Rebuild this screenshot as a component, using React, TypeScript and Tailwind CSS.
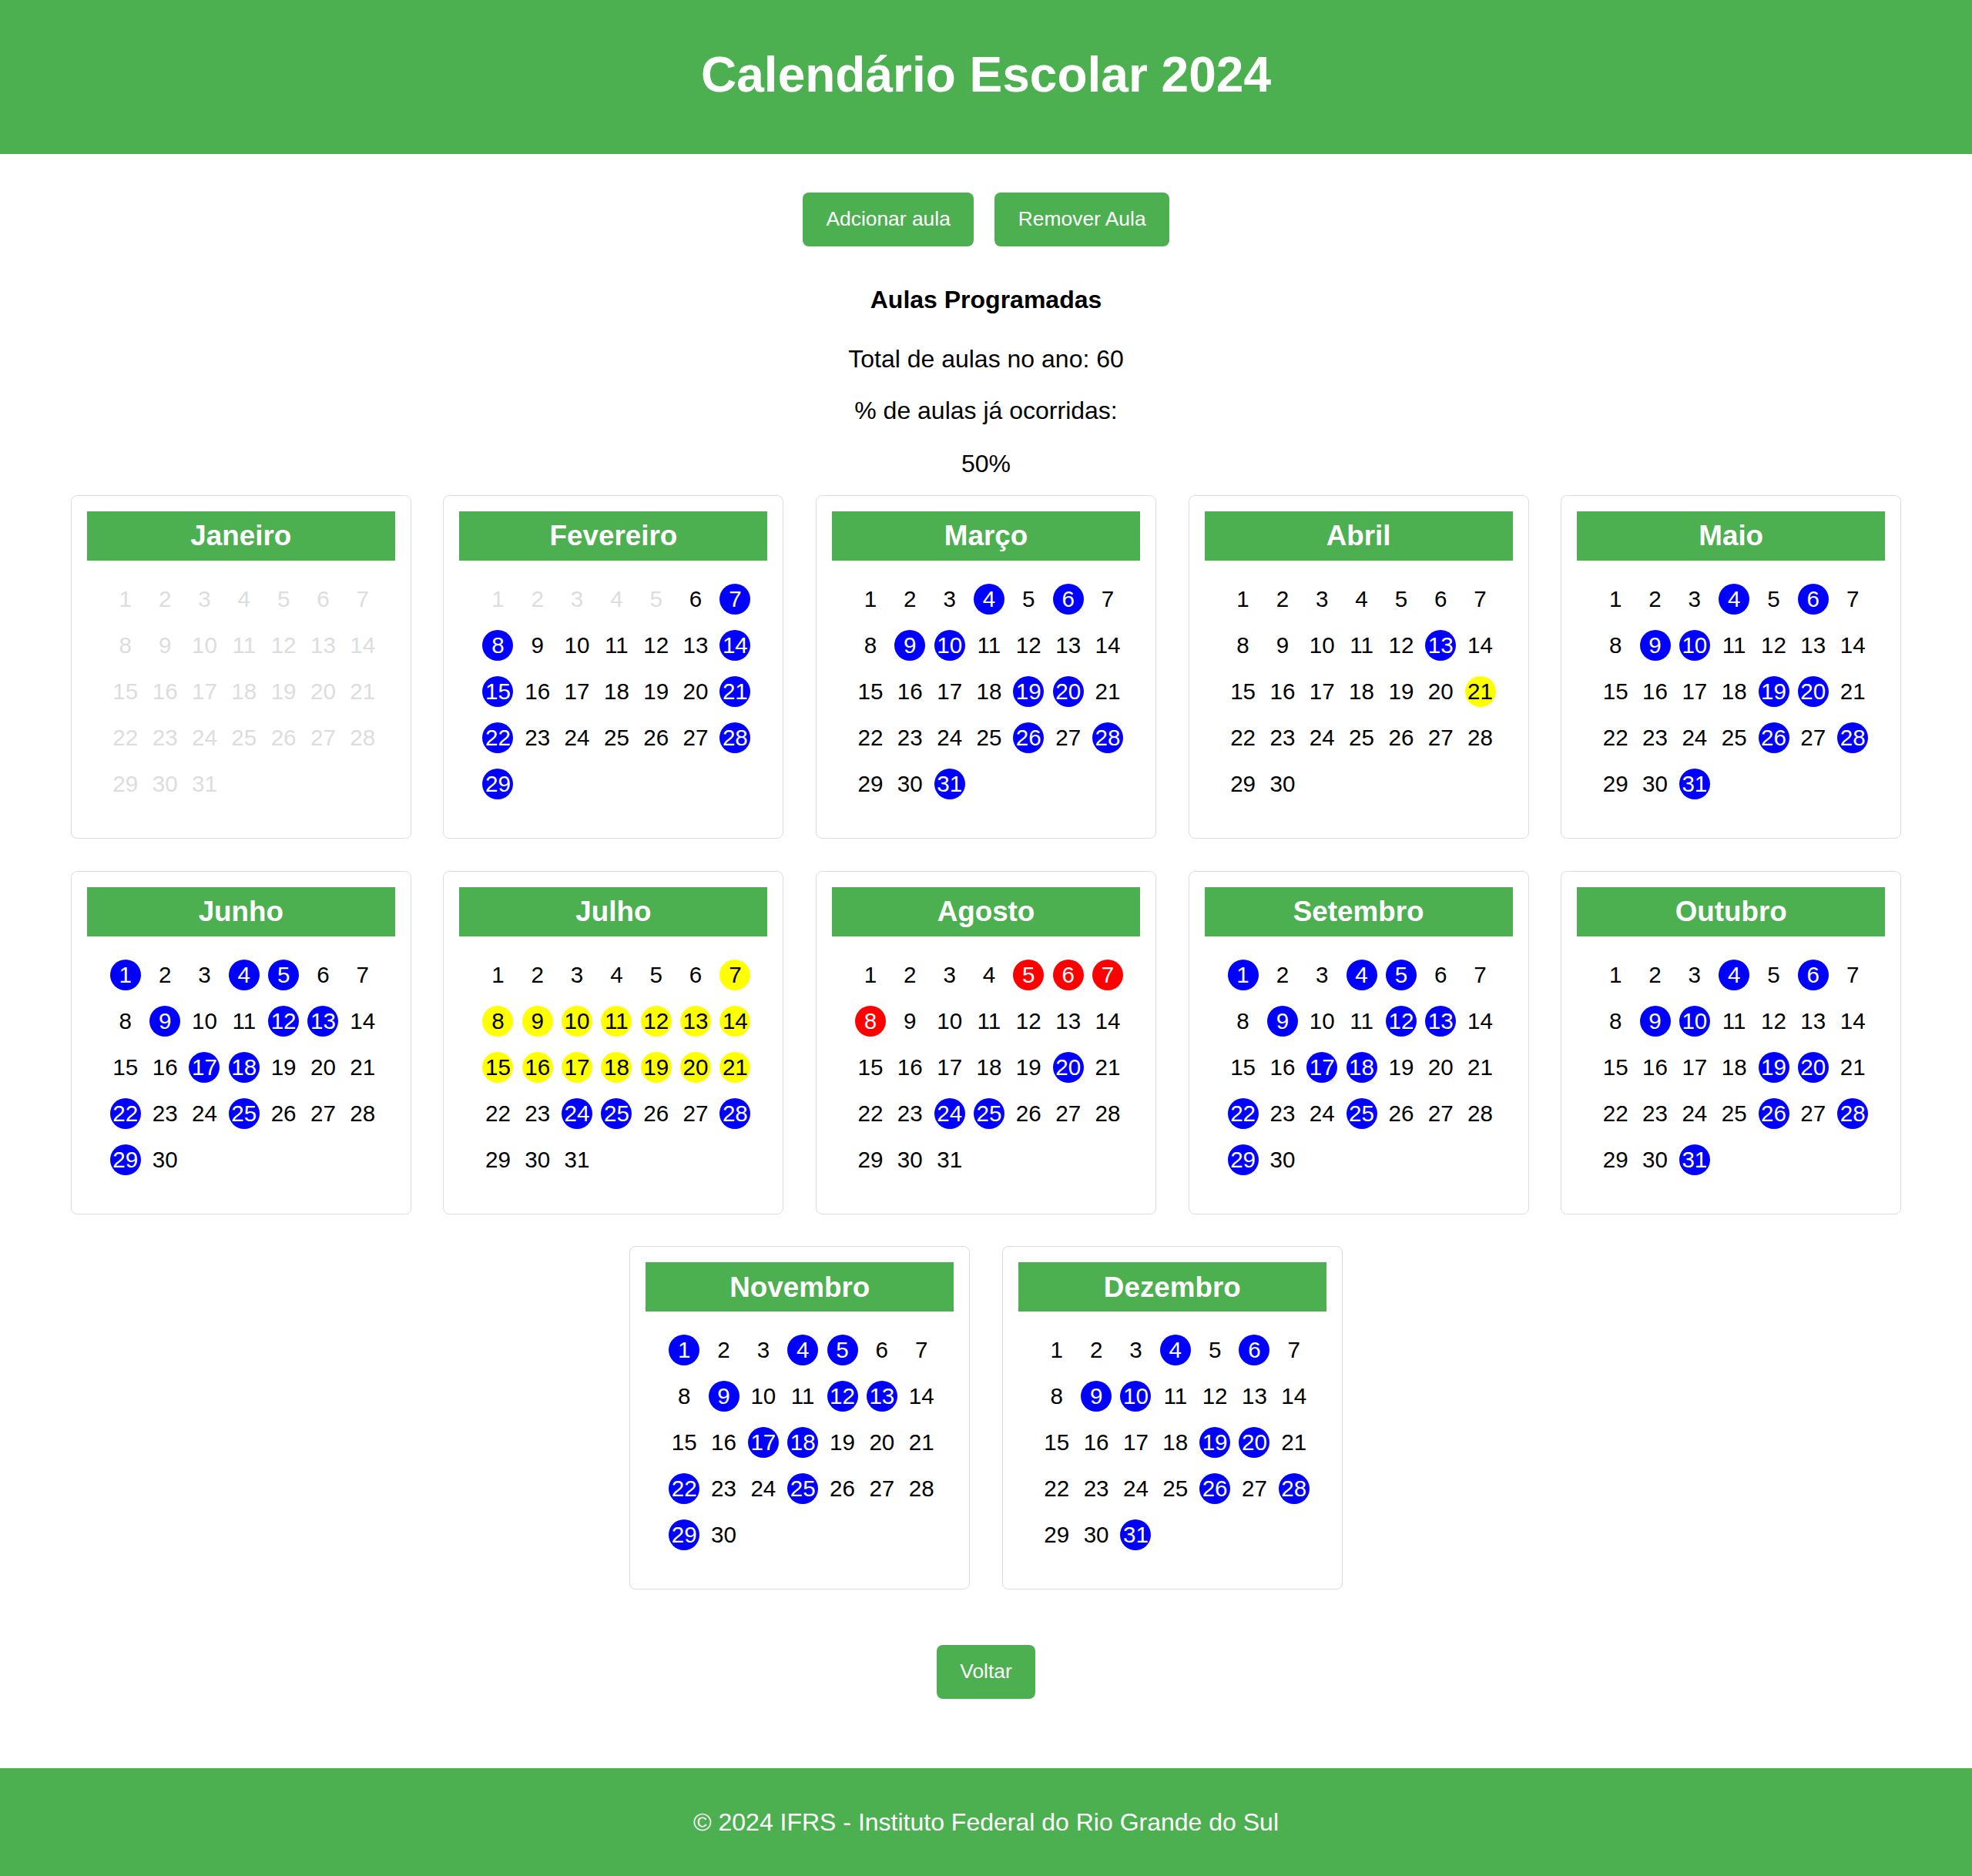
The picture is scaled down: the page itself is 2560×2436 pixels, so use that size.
import React from 'react';

type DayKind = 'past' | 'blue' | 'yellow' | 'red' | 'normal';

interface Month {
  name: string;
  days: number;
  past?: number[];
  blue?: number[];
  yellow?: number[];
  red?: number[];
}

const range = (a: number, b: number) => Array.from({ length: b - a + 1 }, (_, i) => a + i);

const patternA = [4, 6, 9, 10, 19, 20, 26, 28, 31];
const patternB = [1, 4, 5, 9, 12, 13, 17, 18, 22, 25, 29];

const months: Month[] = [
  { name: 'Janeiro', days: 31, past: range(1, 31) },
  { name: 'Fevereiro', days: 29, past: range(1, 5), blue: [7, 8, 14, 15, 21, 22, 28, 29] },
  { name: 'Março', days: 31, blue: patternA },
  { name: 'Abril', days: 30, blue: [13], yellow: [21] },
  { name: 'Maio', days: 31, blue: patternA },
  { name: 'Junho', days: 30, blue: patternB },
  { name: 'Julho', days: 31, yellow: range(7, 21), blue: [24, 25, 28] },
  { name: 'Agosto', days: 31, red: [5, 6, 7, 8], blue: [20, 24, 25] },
  { name: 'Setembro', days: 30, blue: patternB },
  { name: 'Outubro', days: 31, blue: patternA },
  { name: 'Novembro', days: 30, blue: patternB },
  { name: 'Dezembro', days: 31, blue: patternA },
];

const kindOf = (m: Month, d: number): DayKind => {
  if (m.past?.includes(d)) return 'past';
  if (m.blue?.includes(d)) return 'blue';
  if (m.yellow?.includes(d)) return 'yellow';
  if (m.red?.includes(d)) return 'red';
  return 'normal';
};

const dayStyles: Record<DayKind, string> = {
  past: 'text-[#dddddd]',
  blue: 'bg-[#0000ff] text-white',
  yellow: 'bg-[#ffff00] text-black',
  red: 'bg-[#ff0000] text-white',
  normal: 'text-black',
};

const MonthCard = ({ month }: { month: Month }) => (
  <div className="w-[442px] border border-[#dddddd] rounded-[8px] p-[20px] bg-white">
    <div className="h-[64px] bg-[#4caf50] flex items-center justify-center text-white font-bold text-[36.8px]">
      {month.name}
    </div>
    <div className="pl-[30px] py-[30px] grid grid-cols-[repeat(7,40px)] gap-x-[11.33px] gap-y-[20px]">
      {range(1, month.days).map((d) => (
        <div
          key={d}
          className={`w-[40px] h-[40px] rounded-full flex items-center justify-center text-[29.6px] leading-[40px] whitespace-nowrap ${dayStyles[kindOf(month, d)]}`}
        >
          {d}
        </div>
      ))}
    </div>
  </div>
);

export default function App() {
  return (
    <div className="min-h-[2436px] bg-white flex flex-col font-['Liberation_Sans',Arial,sans-serif] text-black">
      {/* Cabeçalho */}
      <header className="h-[200px] bg-[#4caf50] pt-[61px] text-center">
        <h1 className="text-[64px] font-bold text-white leading-[1.149]">Calendário Escolar 2024</h1>
      </header>

      {/* Botões */}
      <div className="mt-[50px] flex justify-center gap-[27px]">
        <button className="h-[70px] px-[30.5px] bg-[#4caf50] text-white text-[26.4px] rounded-[8px]">
          Adcionar aula
        </button>
        <button className="h-[70px] px-[30.5px] bg-[#4caf50] text-white text-[26.4px] rounded-[8px]">
          Remover Aula
        </button>
      </div>

      {/* Resumo */}
      <div className="text-center text-[32px] leading-[36.8px]">
        <h3 className="mt-[50.5px] font-bold">Aulas Programadas</h3>
        <p className="mt-[40.5px]">Total de aulas no ano: 60</p>
        <p className="mt-[30.9px]">% de aulas já ocorridas:</p>
        <p className="mt-[31.5px]">50%</p>
      </div>

      {/* Meses */}
      <div className="mt-[22.4px] flex flex-wrap justify-center gap-x-[41.6px] gap-y-[41.6px]">
        {months.map((m) => (
          <MonthCard key={m.name} month={m} />
        ))}
      </div>

      <div className="mt-[72px] flex justify-center">
        <button className="h-[70px] px-[30px] bg-[#4caf50] text-white text-[26.4px] rounded-[8px]">
          Voltar
        </button>
      </div>

      {/* Rodapé */}
      <footer className="mt-[90px] h-[140px] bg-[#4caf50] flex items-center justify-center text-white text-[32px]">
        © 2024 IFRS - Instituto Federal do Rio Grande do Sul
      </footer>
    </div>
  );
}
